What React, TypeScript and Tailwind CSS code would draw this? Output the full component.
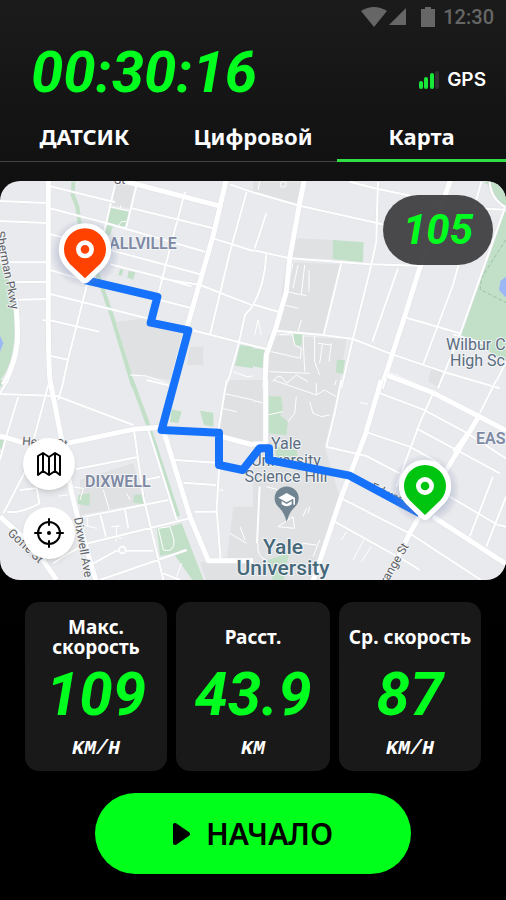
import { useState } from "react";

const tabs = ["ДАТСИК", "Цифровой", "Карта"];

const stats = [
  { title: "Макс. скорость", value: "109", unit: "KM/H" },
  { title: "Расст.", value: "43.9", unit: "KM" },
  { title: "Ср. скорость", value: "87", unit: "KM/H" },
];

interface MapTile {
  offset: string;
  major: string;
  minor: string;
  path: string;
  green: string;
  strip: string;
  campus: string;
  water: string;
}

// The city map is drawn in four tiles, each with its own origin
const tiles: MapTile[] = [
  {
    offset: "translate(0 -18)",
    major:
      "M145 0V420Q145 580 152 640M340 10L655 92M682 0L640 180L560 460L510 650M45 370Q55 440 52 500Q45 570 10 630",
    minor:
      "M0 78L140 84M0 138L140 144M20 262H140M40 322L140 320M55 374L140 372M150 34L345 82M150 100L320 145L615 230M390 98L640 160M150 178L200 190M330 225L490 268L600 298M330 268L480 306L575 335M150 285L250 315M150 357L450 432M128 436H150L298 470M150 542L205 554M555 50L515 200L472 370M410 30L378 160M345 30L310 180M262 325L205 550L185 640M480 310L600 330L759 392M640 190L759 228M575 465L759 512M740 50L690 230L630 480M759 392L735 420L715 510L690 600L675 640M690 28L759 52M480 375L570 398",
    path: "M390 600L440 603L520 632M700 590L740 605L759 603M330 95L388 108M362 90V100M355 155Q360 135 380 140",
    green:
      "M328 98L388 110L380 155L340 150L330 182L312 175ZM360 282L370 285L365 302L355 300ZM385 288L406 292L400 314L382 308ZM0 265Q38 320 44 400Q52 560 0 615ZM720 510L759 515V580L705 572Z",
    strip: "M220 20L218 60L232 95L240 150M290 290L335 420L400 635",
    campus: "M350 20H405L390 100L330 90ZM350 440L440 430L550 475L510 615L392 595ZM570 515H610V570H560Z",
    water: "M0 482L10 505L0 530Z",
  },
  {
    offset: "translate(759 -18)",
    major:
      "M155 10L138 95L110 250L100 350L68 460L40 540L35 640M594 10L560 110L500 280L458 415L385 640M400 595L500 635",
    minor:
      "M0 52L140 92L375 145L590 190M290 20L375 42L560 80M375 20L372 110L370 200L350 290L300 490L265 640M0 225L110 250L350 268L500 272M265 265L212 480M435 280L358 500M685 20L600 330L510 570M755 100L620 480L555 640M460 428L620 475M70 467L210 480L300 492L410 535L570 590L740 640M0 512L40 522M40 238Q35 330 0 390M0 388L75 410M40 115L5 220M640 98L759 104M710 20Q712 70 759 98M759 560L730 620M600 478L700 508",
    path: "M120 265L105 330M135 270L120 340M155 270L145 360M168 285V350M95 390L135 400M100 350L160 362M145 435L135 470M80 480L118 475L125 510L145 520L142 550L100 540L55 530M150 480L155 590M185 480V560L200 600M50 590L170 595M195 505L235 510M208 510L200 565M235 505L228 560M60 620Q80 585 100 625L130 600L165 620M5 480L15 435L25 480M82 28A6 6 0 1 1 100 28A6 6 0 1 1 82 28M15 45L20 20",
    green:
      "M240 195L332 202L330 262L238 252ZM755 110H759V560L625 480ZM690 20H759V92Q715 80 705 30ZM120 478H150L145 512L125 510ZM252 555H276L270 598L248 592ZM0 520L35 524L30 580L0 574Z",
    strip: "",
    campus:
      "M130 190L240 195L238 252L110 248ZM100 262L262 268L210 478L70 462ZM45 480L280 492L258 640H36ZM0 20H150L138 90L0 55ZM535 580L570 592L555 635L525 620Z",
    water: "M759 305L742 318L738 345L759 368Z",
  },
  {
    offset: "translate(0 597)",
    major:
      "M150 0L185 180L215 340L235 420L290 610M0 168L70 188M200 190L400 148L485 142M490 150L570 410L625 542H759M665 170L759 195M0 410L100 500L170 600",
    minor:
      "M0 42L170 48L400 135M192 0L175 60M145 15L75 275L10 400M55 50L20 165L0 240M25 0L0 40M402 150L430 350L490 600M445 150L530 420M228 268L410 232M430 300L480 290M525 240L650 248M550 308L648 315M585 395H650M245 412L505 360M265 490L570 415M375 390L385 445M300 400L318 470M680 0L655 150M658 250L650 390L662 540M60 330L110 325L118 370Q60 402 22 395M160 550Q200 520 265 490M280 550L350 512H460M300 600L560 510M490 580L540 600M440 0L522 20",
    path: "M670 40L759 60M665 85L710 95M175 348L205 345M210 320L250 325M250 325L240 360M262 410V440M350 435L348 485M335 440L360 438M340 470L365 475M235 430L290 445M655 330H670M690 460L740 490M720 440L735 480M545 550L530 590M480 540L550 510M310 330L328 390M380 340L390 360M475 445L490 510Q525 520 522 480L510 440Z",
    green:
      "M510 440L545 430L612 604H580L520 520ZM470 445L515 438L525 520L480 528ZM515 88L545 95L535 130L510 125ZM600 92L640 98V140L612 135ZM235 345L270 340L268 378L232 372ZM402 345L435 342L432 372L400 368ZM0 180H15L5 210L0 205ZM0 0H20L0 22Z",
    strip: "M395 0L450 150L535 410",
    campus:
      "M680 0H759V190L660 160ZM700 380H759V540H680ZM240 300L400 250L430 370L240 405ZM600 545H759V604H620Z",
    water: "",
  },
  {
    offset: "translate(759 597)",
    major:
      "M38 0V190M385 0L335 170L265 350L180 604M400 -15L540 38L680 110L759 152M680 105L580 270L470 460L400 604M540 410L759 552M0 192H40",
    minor:
      "M265 0L245 100L220 200M375 38L510 88L640 158L759 235M335 155L470 200L560 250M540 40L500 130L430 320M490 145L620 215L740 280M220 200L340 228L440 280M265 355L470 460L690 604M245 425L460 545L500 570M590 350L740 438M720 290L650 470M759 350L700 500M730 0L680 100M20 320L12 490M740 435L759 440M640 160L600 215",
    path: "M60 0L190 45V10M130 50L125 100L105 125M45 105L90 95M170 65L180 100L205 110L230 105M190 45L215 30L250 50M0 62L30 68M320 68L345 72M335 475L300 540M355 500L325 545M280 455L265 480M40 320L80 330M75 440L120 410L125 445ZM150 410L160 385M165 400L170 380M15 490Q10 530 40 540M180 530L200 480M140 520L150 490L190 495M250 0L245 15",
    green:
      "M45 48L85 50L90 95L80 105L105 125L100 165L45 160ZM65 200L130 205L135 238L70 235ZM45 540L108 520L92 600H60Z",
    strip: "",
    campus: "M0 0H262L215 200L260 350L180 604H0Z",
    water: "",
  },
];

const route =
  "M255 297L472 348L452 425L565 448L485 747L657 755V852L728 867L779 802H807V837L1049 884L1259 997";

interface PinProps {
  x: number;
  y: number;
  color: string;
}

function Pin({ x, y, color }: PinProps) {
  return (
    <g transform={`translate(${x} ${y})`}>
      <circle cy="10" r="105" fill="url(#pinShadow)" />
      <path
        d="M0 87L-46 43A63 63 0 1 1 46 43Z"
        fill={color}
        stroke="white"
        strokeWidth="31"
        strokeLinejoin="round"
        paintOrder="stroke"
      />
      <circle r="20" fill={color} stroke="white" strokeWidth="14" />
    </g>
  );
}

function CityMap() {
  return (
    <svg
      viewBox="0 0 506 399"
      className="block h-auto w-full font-[Roboto,sans-serif]"
      role="img"
      aria-label="Route map"
    >
      <defs>
        <radialGradient id="pinShadow">
          <stop offset="60%" stopColor="#7280a8" stopOpacity="0.4" />
          <stop offset="100%" stopColor="#7280a8" stopOpacity="0" />
        </radialGradient>
      </defs>
      <rect width="506" height="399" fill="#e9eaed" />
      <svg width="506" height="399" viewBox="0 0 1518 1197" fill="none">
        {tiles.map((tile) => (
          <g key={tile.offset} transform={tile.offset}>
            <path d={tile.campus} fill="#e0e1e3" />
            <path d={tile.green} fill="#c2e0c8" />
            <path d={tile.strip} stroke="#c2e0c8" strokeWidth="12" />
            <path d={tile.water} fill="#9bb8f5" />
          </g>
        ))}
        <path d="M1518 175L1445 290L1440 325L1518 365" stroke="#8fae97" strokeWidth="2" strokeDasharray="12 6" />
        {tiles.map((tile) => (
          <g key={tile.offset} transform={tile.offset} strokeLinejoin="round">
            <path d={tile.path} stroke="white" strokeWidth="3" />
            <path d={tile.minor} stroke="#dfe1e5" strokeWidth="8" />
            <path d={tile.major} stroke="#dfe1e5" strokeWidth="18" />
            <path d={tile.minor} stroke="white" strokeWidth="6" />
            <path d={tile.major} stroke="white" strokeWidth="15" />
          </g>
        ))}
        <circle cx="367" cy="1107" r="10" fill="#e9eaed" stroke="white" strokeWidth="5" />
        <g transform="translate(860 955)">
          <path d="M0 67Q-8 38 -24 24A36 36 0 1 1 24 24Q8 38 0 67Z" fill="#708491" />
          <path d="M-25 -5L0 -19L25 -5L0 9ZM-15 5V15Q0 27 15 15V5L0 14ZM20 -4H25V16H20Z" fill="white" />
        </g>
      </svg>

      <g stroke="#f3f4f6" strokeWidth="2" paintOrder="stroke" strokeLinejoin="round">
        <g fill="#7e89a3" fontSize="16" fontWeight="600">
          <text x="109" y="68">ALLVILLE</text>
          <text x="85" y="306">DIXWELL</text>
          <text x="476" y="263">EAS</text>
        </g>
        <g fill="#596d80" fontSize="16">
          <text x="446" y="169">Wilbur C</text>
          <text x="450" y="185">High Sc</text>
          <g textAnchor="middle">
            <text x="286" y="268">Yale</text>
            <text x="286" y="285">University</text>
            <text x="286" y="301">Science Hill</text>
          </g>
        </g>
        <g fill="#46697a" fontSize="21" fontWeight="500" textAnchor="middle">
          <text x="283" y="373">Yale</text>
          <text x="283" y="394">University</text>
        </g>
        <g fill="#5d6165" fontSize="12">
          <text x="114" y="3">St</text>
          <text transform="translate(-4 51) rotate(79)">Sherman Pkwy</text>
          <text transform="translate(74 337) rotate(80)">Dixwell Ave</text>
          <text transform="translate(7 353) rotate(43)">Goffe St</text>
          <text transform="translate(22 264) rotate(4)">Henry St</text>
          <text transform="translate(370 309) rotate(24)">Edwards St</text>
          <text transform="translate(409 365) rotate(-60)" textAnchor="end">Orange St</text>
        </g>
      </g>

      <svg width="506" height="399" viewBox="0 0 1518 1197" fill="none">
        <path d={route} stroke="#1672fa" strokeWidth="24" strokeLinejoin="round" />
        <Pin x={255} y={205} color="#ff4200" />
        <Pin x={1275} y={915} color="#00c510" />
      </svg>
    </svg>
  );
}

function StatusBar() {
  return (
    <div className="flex h-[34px] items-center justify-end pr-3 text-[#666]">
      <svg width="46" height="20" viewBox="0 0 46 20" fill="currentColor" aria-hidden="true">
        <path d="M0 4Q13 -4 26 4L13 20Z" />
        <path d="M45 1V18H28Z" />
      </svg>
      <svg width="14" height="20" viewBox="0 0 14 20" className="ml-3.5" fill="currentColor" aria-hidden="true">
        <path d="M0 2H4V0H10V2H14V20H0Z" />
      </svg>
      <span className="ml-2 font-[Roboto,sans-serif] text-[20px] leading-8 font-medium">12:30</span>
    </div>
  );
}

export default function App() {
  const [activeTab, setActiveTab] = useState("Карта");

  return (
    <div className="flex min-h-screen flex-col bg-linear-to-b from-[#1b1b1b] to-black to-95% pb-6 font-['Noto_Sans',sans-serif] text-white">
      <StatusBar />

      <header className="flex h-[76px] items-center justify-between pr-5 pl-[31px]">
        <div className="font-[Roboto,sans-serif] text-[58px] leading-[72px] font-bold text-[#00ff1e] italic">
          00:30:16
        </div>
        <div className="mt-4 flex items-center gap-2">
          <svg width="20" height="18" viewBox="0 0 20 18" aria-hidden="true">
            <g fill="#18e838">
              <rect y="10" width="4" height="8" rx="2" />
              <rect x="5" y="6" width="4" height="12" rx="2" />
              <rect x="11" y="2" width="4" height="16" rx="2" />
            </g>
            <rect x="16" width="4" height="18" rx="2" fill="#303030" />
          </svg>
          <span className="font-[Inter,sans-serif] text-[19px] leading-6 font-semibold">GPS</span>
        </div>
      </header>

      <div role="tablist" className="grid h-[52px] grid-cols-3 border-b border-[#444]">
        {tabs.map((tab) => (
          <button
            key={tab}
            role="tab"
            aria-selected={activeTab === tab}
            onClick={() => setActiveTab(tab)}
            className={`-mb-px border-b-[3px] pt-1 text-[22px] leading-[45px] font-bold ${
              activeTab === tab ? "border-[#30df43]" : "border-transparent"
            }`}
          >
            {tab}
          </button>
        ))}
      </div>

      <main>
        <section className="relative mt-[19px] overflow-hidden rounded-[20px]">
          <CityMap />
          <div className="absolute top-3.5 right-[13px] flex h-[70px] w-[110px] items-center justify-center rounded-full bg-[#404043]/95 font-[Roboto,sans-serif] text-[42px] leading-[70px] font-bold text-[#00ff1e] italic">
            105
          </div>
          <div className="absolute bottom-[21px] left-[23px] flex flex-col gap-[17px] text-black">
            <button aria-label="Map type" className="grid size-[52px] place-items-center rounded-full bg-white shadow-md">
              <svg width="26" height="26" viewBox="0 0 26 26" fill="none" stroke="currentColor" strokeWidth="2" strokeLinejoin="round">
                <path d="M2 5L7 2L13 6L19 2L24 5V24L19 20L13 24L7 20L2 24ZM7 2V20M13 6V24M19 2V20" />
              </svg>
            </button>
            <button aria-label="My location" className="grid size-[52px] place-items-center rounded-full bg-white shadow-md">
              <svg width="30" height="30" viewBox="0 0 30 30" fill="none" stroke="currentColor" strokeWidth="2">
                <circle cx="15" cy="15" r="11" />
                <circle cx="15" cy="15" r="2" fill="currentColor" stroke="none" />
                <path d="M15 1V7M15 23V29M1 15H7M23 15H29" strokeLinecap="round" />
              </svg>
            </button>
          </div>
        </section>

        <section className="mt-[22px] grid grid-cols-[142fr_154fr_142fr] gap-[9px] px-[25px]">
          {stats.map((stat) => (
            <div key={stat.title} className="flex flex-col items-center rounded-[14px] bg-[#191919] pt-3 pb-2.5">
              <h2 className="flex h-[46px] items-center text-center text-[19px] leading-5 font-bold">
                {stat.title}
              </h2>
              <div className="mt-1 font-[Roboto,sans-serif] text-[60px] leading-[62px] font-bold text-[#00ff1e] italic">
                {stat.value}
              </div>
              <div className="mt-[11px] font-['Liberation_Mono',monospace] text-[20px] leading-6 font-bold italic">
                {stat.unit}
              </div>
            </div>
          ))}
        </section>

        <button className="mx-[95px] mt-[22px] flex h-[81px] w-[calc(100%-190px)] items-center justify-center gap-4 rounded-full bg-[#00ff1a] text-[30px] font-semibold text-black">
          <svg width="17" height="22" viewBox="0 0 17 22" aria-hidden="true">
            <path d="M2 2V20L15 11Z" fill="currentColor" stroke="currentColor" strokeWidth="4" strokeLinejoin="round" />
          </svg>
          НАЧАЛО
        </button>
      </main>
    </div>
  );
}
